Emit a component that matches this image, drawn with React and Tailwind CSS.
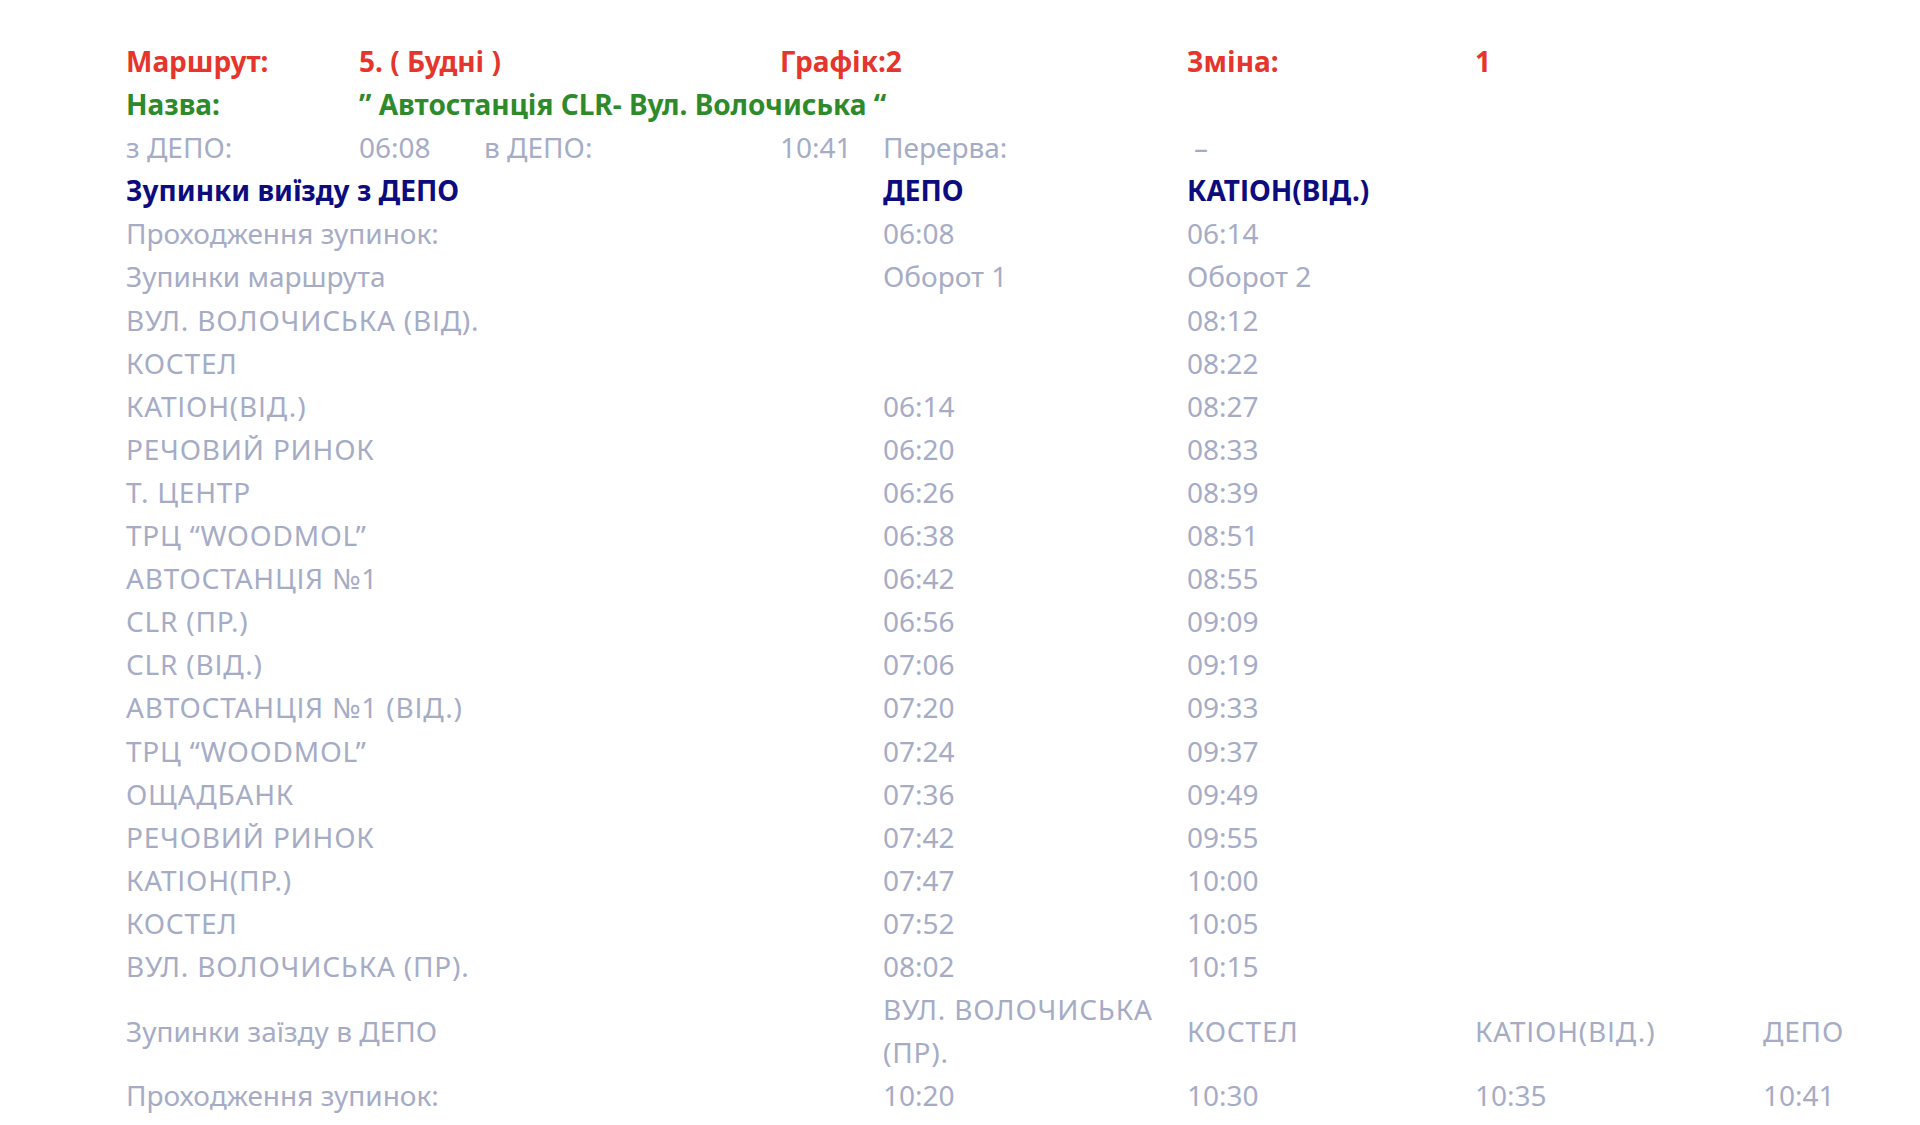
import React from "react";

const stops = [
  ["ВУЛ. ВОЛОЧИСЬКА (ВІД).", "", "08:12"],
  ["КОСТЕЛ", "", "08:22"],
  ["КАТІОН(ВІД.)", "06:14", "08:27"],
  ["РЕЧОВИЙ РИНОК", "06:20", "08:33"],
  ["Т. ЦЕНТР", "06:26", "08:39"],
  ["ТРЦ “WOODMOL”", "06:38", "08:51"],
  ["АВТОСТАНЦІЯ №1", "06:42", "08:55"],
  ["CLR (ПР.)", "06:56", "09:09"],
  ["CLR (ВІД.)", "07:06", "09:19"],
  ["АВТОСТАНЦІЯ №1 (ВІД.)", "07:20", "09:33"],
  ["ТРЦ “WOODMOL”", "07:24", "09:37"],
  ["ОЩАДБАНК", "07:36", "09:49"],
  ["РЕЧОВИЙ РИНОК", "07:42", "09:55"],
  ["КАТІОН(ПР.)", "07:47", "10:00"],
  ["КОСТЕЛ", "07:52", "10:05"],
  ["ВУЛ. ВОЛОЧИСЬКА (ПР).", "08:02", "10:15"],
];

const App = () => {
  return (
    <div className="min-h-screen bg-white font-['Noto_Sans',sans-serif] text-[28px] leading-[43.1px] text-[#a6acc6]">
      <div className="grid grid-cols-[233px_125px_296px_103px_304px_288px_288px_1fr] pl-[126px] pt-[40px]">
        {/* Header */}
        <div className="font-bold text-[#e5352c]">Маршрут:</div>
        <div className="col-span-2 font-bold text-[#e5352c]">5. ( Будні )</div>
        <div className="col-span-2 font-bold text-[#e5352c]">Графік:2</div>
        <div className="font-bold text-[#e5352c]">Зміна:</div>
        <div className="col-span-2 font-bold text-[#e5352c]">1</div>

        <div className="font-bold text-[#2e8a2b]">Назва:</div>
        <div className="col-span-7 font-bold text-[#2e8a2b]">” Автостанція CLR- Вул. Волочиська “</div>

        <div>з ДЕПО:</div>
        <div>06:08</div>
        <div>в ДЕПО:</div>
        <div>10:41</div>
        <div>Перерва:</div>
        <div className="col-span-3 pl-[7px]">–</div>

        <div className="col-span-4 font-bold text-[#0c0c7e]">Зупинки виїзду з ДЕПО</div>
        <div className="font-bold text-[#0c0c7e]">ДЕПО</div>
        <div className="col-span-3 font-bold text-[#0c0c7e]">КАТІОН(ВІД.)</div>

        <div className="col-span-4">Проходження зупинок:</div>
        <div>06:08</div>
        <div className="col-span-3">06:14</div>

        <div className="col-span-4">Зупинки маршрута</div>
        <div>Оборот 1</div>
        <div className="col-span-3">Оборот 2</div>

        {stops.map(([name, a, b], i) => (
          <React.Fragment key={i}>
            <div className="col-span-4 tracking-[0.8px]">{name}</div>
            <div>{a}</div>
            <div className="col-span-3">{b}</div>
          </React.Fragment>
        ))}

        {/* Return to depot */}
        <div className="col-span-4 self-center">Зупинки заїзду в ДЕПО</div>
        <div className="pr-4 tracking-[0.8px]">ВУЛ. ВОЛОЧИСЬКА (ПР).</div>
        <div className="self-center tracking-[0.8px]">КОСТЕЛ</div>
        <div className="self-center tracking-[0.8px]">КАТІОН(ВІД.)</div>
        <div className="self-center tracking-[0.8px]">ДЕПО</div>

        <div className="col-span-4">Проходження зупинок:</div>
        <div>10:20</div>
        <div>10:30</div>
        <div>10:35</div>
        <div>10:41</div>
      </div>
    </div>
  );
};

export default App;
